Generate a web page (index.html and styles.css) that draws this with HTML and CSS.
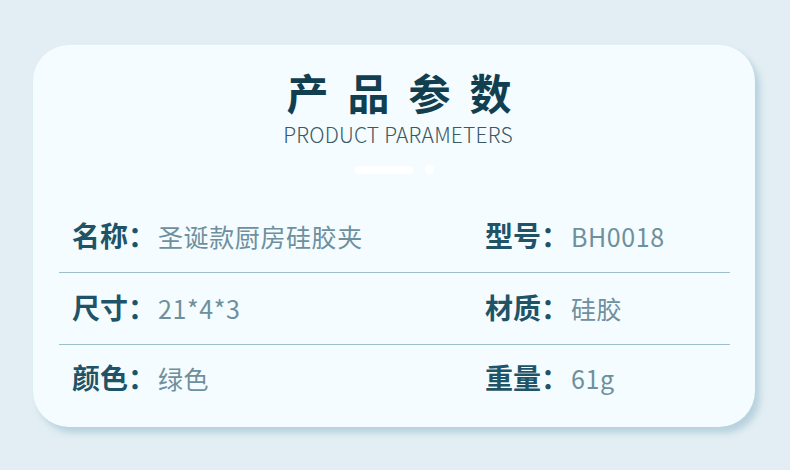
FILE: index.html
```html
<!DOCTYPE html>
<html lang="zh-CN">
<head>
<meta charset="utf-8">
<link rel="stylesheet" href="styles.css">
</head>
<body>
<div class="card">
  <div class="head">
    <h1 class="title">产品参数</h1>
    <div class="subtitle">PRODUCT PARAMETERS</div>
    <div class="dots"><span class="bar"></span><span class="dot"></span></div>
  </div>
  <div class="rows">
    <div class="row">
      <div class="cell"><span class="label">名称：</span><span class="value">圣诞款厨房硅胶夹</span></div>
      <div class="cell right"><span class="label">型号：</span><span class="value">BH0018</span></div>
    </div>
    <div class="row">
      <div class="cell"><span class="label">尺寸：</span><span class="value">21*4*3</span></div>
      <div class="cell right"><span class="label">材质：</span><span class="value">硅胶</span></div>
    </div>
    <div class="row last">
      <div class="cell"><span class="label">颜色：</span><span class="value">绿色</span></div>
      <div class="cell right"><span class="label">重量：</span><span class="value">61g</span></div>
    </div>
  </div>
</div>
</body>
</html>
```

FILE: styles.css
```css
html, body {
  margin: 0;
  padding: 0;
}
body {
  width: 790px;
  height: 470px;
  background: #e2eef3;
  font-family: "Noto Sans CJK SC", "Noto Sans", sans-serif;
  padding: 45px 0 0 33px;
  box-sizing: border-box;
  overflow: hidden;
}
.card {
  width: 722px;
  height: 382px;
  background: #f4fcff;
  border-radius: 36px;
  box-shadow: 5px 6px 6px rgba(150, 188, 204, 0.55);
  box-sizing: border-box;
  padding-top: 25px;
}
.head {
  display: flex;
  flex-direction: column;
  align-items: center;
}
.title {
  margin: 0;
  font-size: 42px;
  line-height: 44px;
  font-weight: 700;
  color: #123f50;
  letter-spacing: 19px;
  padding-left: 29px;
}
.subtitle {
  margin-top: 9px;
  font-size: 21px;
  line-height: 22px;
  font-weight: 200;
  color: #3a5866;
  letter-spacing: 0.2px;
  padding-left: 8px;
}
.dots {
  margin-top: 20px;
  display: flex;
  gap: 12px;
  align-items: center;
  height: 9px;
}
.bar {
  width: 58px;
  height: 8px;
  border-radius: 4px;
  background: #ffffff;
}
.dot {
  width: 9px;
  height: 9px;
  border-radius: 50%;
  background: #ffffff;
}
.rows {
  margin: 27px 25px 0 26px;
}
.row {
  display: flex;
  height: 72px;
  align-items: center;
  border-bottom: 1px solid #9fbfcc;
  padding-left: 13px;
  padding-bottom: 4px;
  box-sizing: border-box;
}
.row.last {
  border-bottom: none;
  padding-bottom: 9px;
}
.cell {
  width: 413px;
  display: flex;
  align-items: baseline;
}
.cell.right {
  width: auto;
}
.label {
  font-size: 28px;
  font-weight: 700;
  color: #1f5468;
}
.value {
  font-size: 25px;
  font-weight: 400;
  color: #6e909e;
  margin-left: 2px;
  letter-spacing: 0.6px;
}
```
